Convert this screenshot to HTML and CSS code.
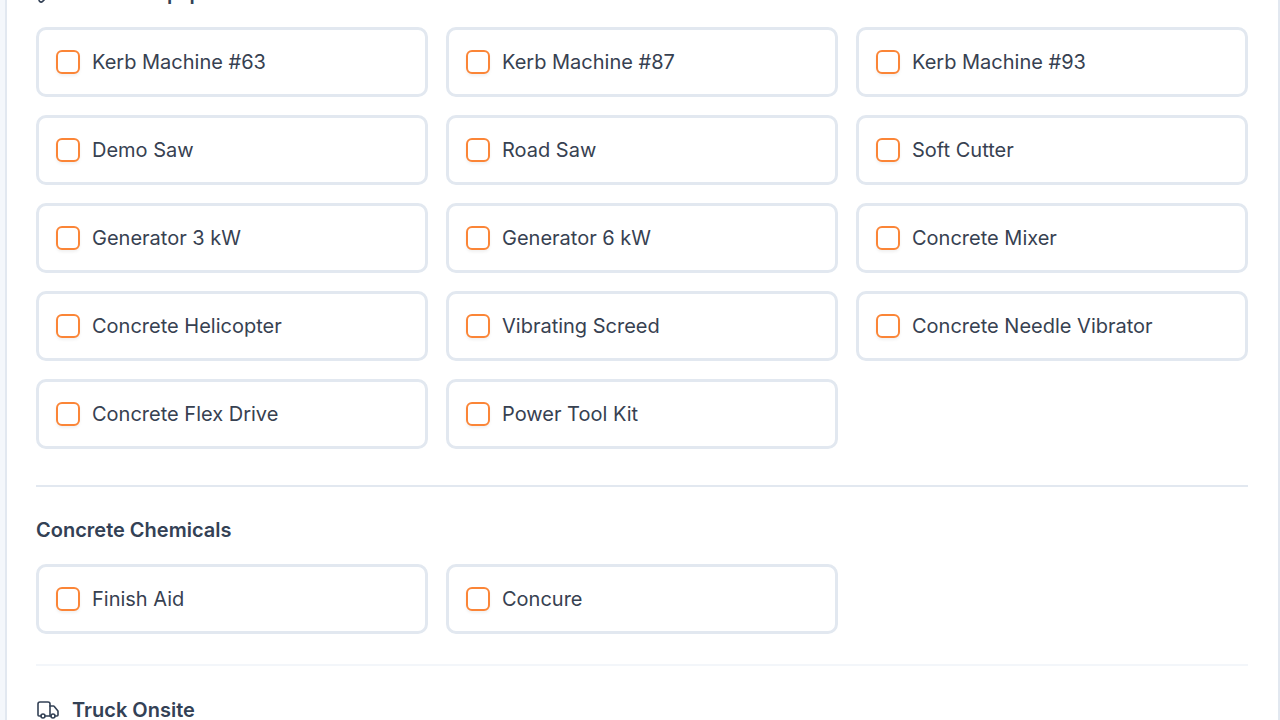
FILE: index.html
```
<!DOCTYPE html>
<html lang="en">
<head>
    <meta charset="UTF-8">
    <meta name="viewport" content="width=device-width, initial-scale=1.0">
    <title>Equipment</title>
    <link rel="stylesheet" href="styles.css">
</head>
<body>
    <main class="panel">
        <section class="group">
            <h2 class="group-title">
                <svg class="icon" viewBox="0 0 24 24"><path d="M14.7 6.3a1 1 0 0 0 0 1.4l1.6 1.6a1 1 0 0 0 1.4 0l3.77-3.77a6 6 0 0 1-7.94 7.94l-6.91 6.91a2.12 2.12 0 0 1-3-3l6.91-6.91a6 6 0 0 1 7.94-7.94z"/></svg>
                Tools &amp; Equipment
            </h2>
            <div class="options">
                <label class="option"><input type="checkbox">Kerb Machine #63</label>
                <label class="option"><input type="checkbox">Kerb Machine #87</label>
                <label class="option"><input type="checkbox">Kerb Machine #93</label>
                <label class="option"><input type="checkbox">Demo Saw</label>
                <label class="option"><input type="checkbox">Road Saw</label>
                <label class="option"><input type="checkbox">Soft Cutter</label>
                <label class="option"><input type="checkbox">Generator 3 kW</label>
                <label class="option"><input type="checkbox">Generator 6 kW</label>
                <label class="option"><input type="checkbox">Concrete Mixer</label>
                <label class="option"><input type="checkbox">Concrete Helicopter</label>
                <label class="option"><input type="checkbox">Vibrating Screed</label>
                <label class="option"><input type="checkbox">Concrete Needle Vibrator</label>
                <label class="option"><input type="checkbox">Concrete Flex Drive</label>
                <label class="option"><input type="checkbox">Power Tool Kit</label>
            </div>
        </section>

        <section class="group group-sub">
            <h3 class="group-title">Concrete Chemicals</h3>
            <div class="options">
                <label class="option"><input type="checkbox">Finish Aid</label>
                <label class="option"><input type="checkbox">Concure</label>
            </div>
        </section>

        <section class="group group-next">
            <h2 class="group-title">
                <svg class="icon" viewBox="0 0 24 24"><path d="M14 18V6a2 2 0 0 0-2-2H4a2 2 0 0 0-2 2v11a1 1 0 0 0 1 1h2"/><path d="M15 18H9"/><path d="M19 18h2a1 1 0 0 0 1-1v-3.65a1 1 0 0 0-.22-.624l-3.48-4.35A1 1 0 0 0 17.52 8H14"/><circle cx="17" cy="18" r="2"/><circle cx="7" cy="18" r="2"/></svg>
                Truck Onsite
            </h2>
        </section>
    </main>
</body>
</html>
```

FILE: styles.css
```
* {
    box-sizing: border-box;
}

body {
    margin: 0;
    height: 100vh;
    overflow: hidden;
    background-color: #f4f7fb;
    font-family: Inter, sans-serif;
    font-size: 20px;
    color: #374151;
}

/* Form panel */
.panel {
    margin: -22px 0 0 5px;
    padding: 0 30px 0 29px;
    background-color: #fff;
    border: 2px solid #e2e8f0;
    border-top: 0;
}

/* Sections */
.group-title {
    display: flex;
    align-items: center;
    gap: 12px;
    margin: 0 0 19px;
    font-size: 20px;
    font-weight: 600;
    line-height: 30px;
    color: #334155;
}

.group-sub {
    margin-top: 36px;
    padding-top: 28px;
    border-top: 2px solid #e2e8f0;
}

.group-next {
    margin-top: 30px;
    padding-top: 29px;
    border-top: 2px solid #f3f6fa;
}

/* Checkbox cards */
.options {
    display: grid;
    grid-template-columns: repeat(3, 1fr);
    gap: 18px;
}

.option {
    display: flex;
    align-items: center;
    gap: 12px;
    height: 70px;
    padding: 0 17px;
    border: 3px solid #e2e8f0;
    border-radius: 10px;
}

.option input {
    appearance: none;
    width: 24px;
    height: 24px;
    margin: 0;
    border: 2px solid #fb8537;
    border-radius: 6px;
    background-color: #fff;
    box-shadow: 0 2px 3px rgba(0, 0, 0, 0.06);
}

.icon {
    width: 24px;
    height: 24px;
    fill: none;
    stroke: currentColor;
    stroke-width: 1.6;
    stroke-linecap: round;
    stroke-linejoin: round;
}
```
